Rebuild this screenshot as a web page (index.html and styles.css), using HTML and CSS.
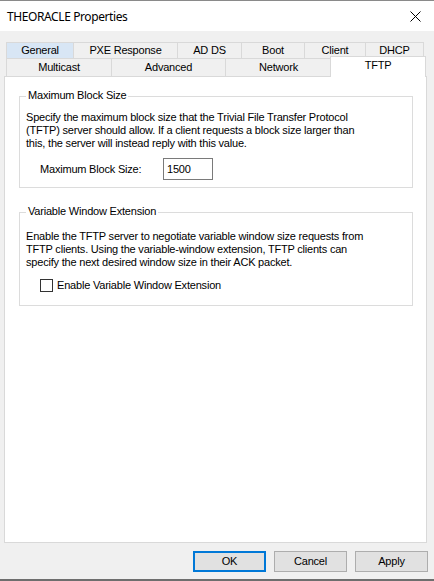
FILE: index.html
```html
<!DOCTYPE html>
<html>
<head>
<meta charset="utf-8">
<link rel="stylesheet" href="styles.css">
</head>
<body>
<div class="window">
  <div class="titlebar">
    <span class="title">THEORACLE Properties</span>
    <svg class="close" width="11" height="11" viewBox="0 0 11 11"><path d="M0.5 0.5L10.5 10.5M10.5 0.5L0.5 10.5" stroke="#000" stroke-width="1" fill="none"/></svg>
  </div>
  <div class="tabs">
    <div class="tabrow row1">
      <div class="tab first hover w-general">General</div>
      <div class="tab w-pxe">PXE Response</div>
      <div class="tab w-adds">AD DS</div>
      <div class="tab w-boot">Boot</div>
      <div class="tab w-client">Client</div>
      <div class="tab w-dhcp">DHCP</div>
    </div>
    <div class="tabrow row2">
      <div class="tab first w-multicast">Multicast</div>
      <div class="tab w-advanced">Advanced</div>
      <div class="tab w-network">Network</div>
      <div class="tab selected w-tftp">TFTP</div>
    </div>
  </div>
  <div class="panel">
    <div class="group g1">
      <span class="group-title">Maximum Block Size</span>
      <p class="desc">Specify the maximum block size that the Trivial File Transfer Protocol<br>(TFTP) server should allow. If a client requests a block size larger than<br>this, the server will instead reply with this value.</p>
      <div class="field">
        <span class="field-label">Maximum Block Size:</span>
        <span class="input">1500</span>
      </div>
    </div>
    <div class="group g2">
      <span class="group-title">Variable Window Extension</span>
      <p class="desc">Enable the TFTP server to negotiate variable window size requests from<br>TFTP clients. Using the variable-window extension, TFTP clients can<br>specify the next desired window size in their ACK packet.</p>
      <div class="check">
        <span class="box"></span>
        <span class="check-label">Enable Variable Window Extension</span>
      </div>
    </div>
  </div>
  <div class="buttons">
    <div class="btn default">OK</div>
    <div class="btn">Cancel</div>
    <div class="btn">Apply</div>
  </div>
</div>
</body>
</html>
```
FILE: styles.css
```css
* { box-sizing: border-box; }
html, body { margin: 0; padding: 0; }
body {
  font-family: "Liberation Sans", Arial, sans-serif;
  font-size: 11px;
  line-height: 13px;
  letter-spacing: -0.2px;
  color: #000;
  background: #f0f0f0;
}
.window {
  width: 434px;
  height: 581px;
  background: #f0f0f0;
  border-top: 1px solid #8a8a8a;
  border-bottom: 2px solid #6e6e6e;
  display: flex;
  flex-direction: column;
}
.titlebar {
  height: 30px;
  background: #fff;
  display: flex;
  align-items: center;
  justify-content: space-between;
  padding: 0 13px 0 7px;
}
.title {
  font-family: "Noto Sans", "Open Sans", sans-serif;
  font-size: 12px;
  letter-spacing: -0.4px;
}
.close { display: block; }
.tabs {
  margin: 11px 0 0 6px;
  width: 418px;
}
.tabrow { display: flex; }
.row1 { height: 16px; }
.row2 { height: 18px; align-items: flex-start; }
.tab {
  border-top: 1px solid #d9d9d9;
  border-right: 1px solid #d9d9d9;
  background: #f0f0f0;
  text-align: center;
  height: 100%;
  padding-top: 1px;
}
.row2 .tab { padding-top: 2px; }
.tab.first { border-left: 1px solid #d9d9d9; }
.tab.hover { background: #d8e6f5; }
.tab.selected {
  position: relative;
  z-index: 2;
  background: #fff;
  border-left: 1px solid #d9d9d9;
  margin: -2px -2px 0 -2px;
  height: 21px;
  padding-top: 2px;
}
.w-general { width: 68px; }
.w-pxe { width: 104px; }
.w-adds { width: 64px; }
.w-boot { width: 63px; }
.w-client { width: 61px; }
.w-dhcp { width: 58px; }
.w-multicast { width: 106px; }
.w-advanced { width: 114px; }
.w-network { width: 106px; }
.w-tftp { width: 96px; }
.panel {
  margin-left: 4px;
  width: 423px;
  height: 467px;
  background: #fff;
  border: 1px solid #d9d9d9;
  display: flex;
  flex-direction: column;
}
.group {
  position: relative;
  border: 1px solid #dcdcdc;
  margin: 0 13px 0 14px;
}
.g1 { margin-top: 19px; padding: 14px 6px 7px; }
.g2 { margin-top: 24px; padding: 17px 6px 13px; }
.group-title {
  position: absolute;
  top: -8px;
  left: 6px;
  padding: 0 2px;
  background: #fff;
  white-space: nowrap;
}
.desc {
  margin: 0;
  white-space: nowrap;
}
.field {
  display: flex;
  align-items: center;
  margin: 8px 0 0 14px;
}
.field-label { width: 123px; }
.input {
  width: 50px;
  height: 22px;
  border: 1px solid #7a7a7a;
  padding: 0 3px;
  display: flex;
  align-items: center;
}
.check {
  display: flex;
  align-items: center;
  margin: 10px 0 0 14px;
}
.box {
  width: 13px;
  height: 13px;
  border: 1px solid #333;
  background: #fff;
  margin-right: 4px;
}
.buttons {
  display: flex;
  justify-content: flex-end;
  gap: 8px;
  margin-top: 8px;
  padding-right: 6px;
}
.btn {
  width: 73px;
  height: 21px;
  border: 1px solid #adadad;
  background: #e1e1e1;
  display: flex;
  align-items: center;
  justify-content: center;
}
.btn.default { border: 2px solid #0078d7; }
```
